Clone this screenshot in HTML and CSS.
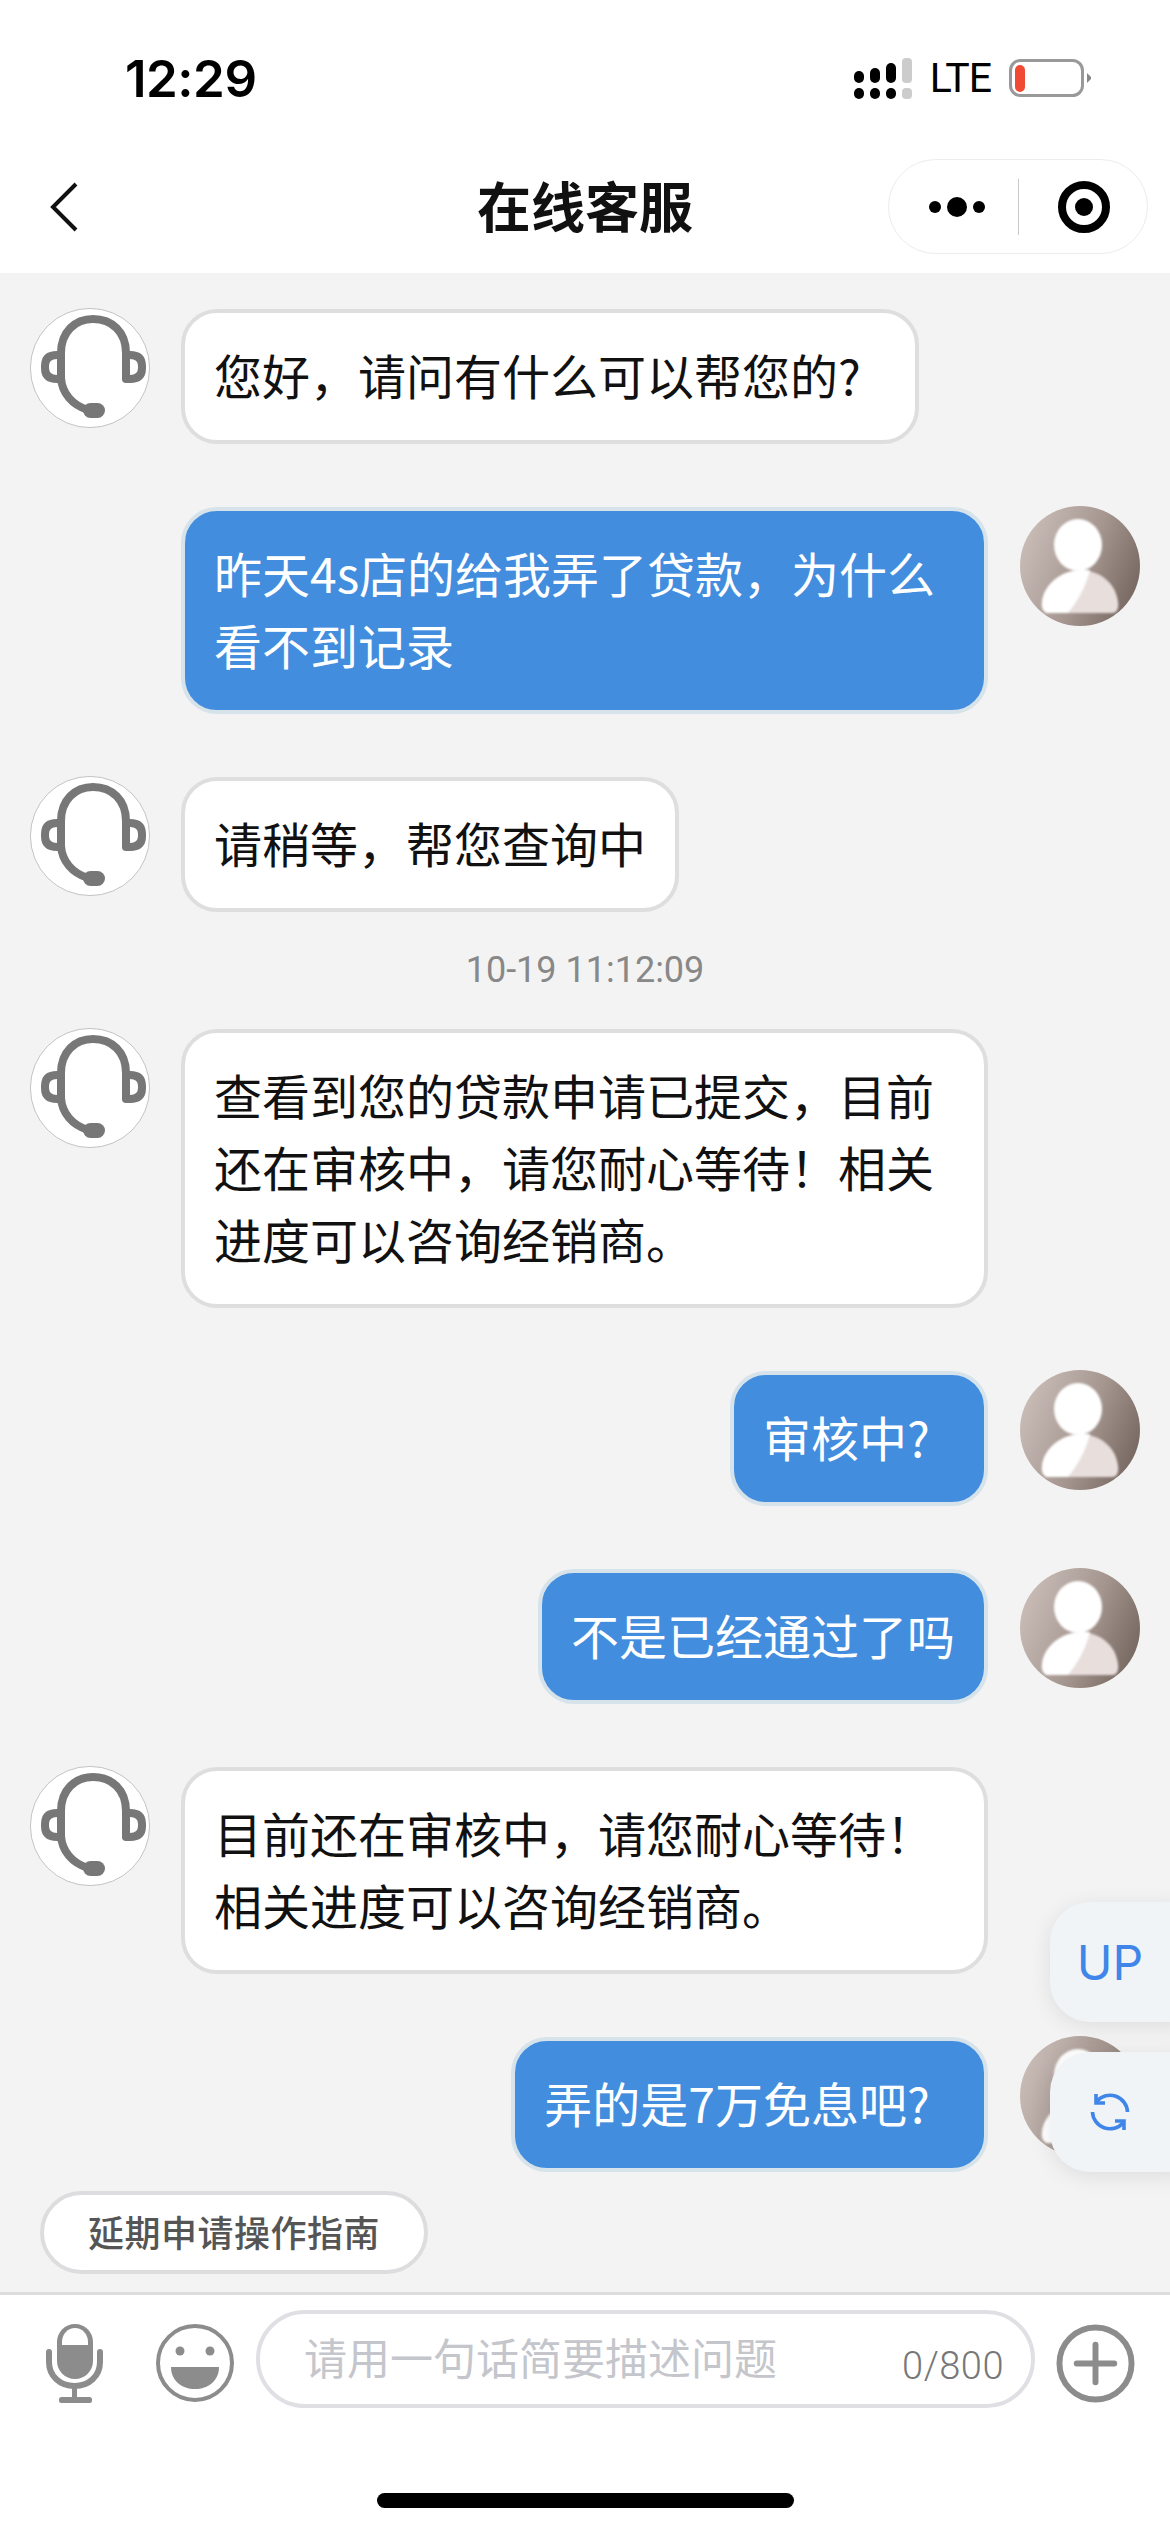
FILE: index.html
```html
<!DOCTYPE html>
<html>
  <head>
    <meta charset="utf-8" />
    <title>在线客服</title>
    <link rel="stylesheet" href="styles.css">
  </head>
  <body>
    <!-- shared avatars -->
    <svg class="defs" width="0" height="0">
      <defs>
        <linearGradient id="user-bg" x1="0" y1="0.3" x2="1" y2="0.7">
          <stop offset="0" stop-color="#cabdb7" />
          <stop offset="0.55" stop-color="#a4958f" />
          <stop offset="1" stop-color="#75665f" />
        </linearGradient>
        <filter id="soft" x="-10%" y="-10%" width="120%" height="120%">
          <feGaussianBlur stdDeviation="1.3" />
        </filter>
        <symbol id="user" viewBox="0 0 120 120">
          <circle cx="60" cy="60" r="60" fill="url(#user-bg)" />
          <g filter="url(#soft)">
            <ellipse cx="58" cy="39" rx="24" ry="26" fill="#fff" />
            <path d="M22 96 C24 78 42 64 60 64 C78 64 96 76 98 96 C99 104 96 107 92 107 H28 C24 107 21 102 22 96 Z" fill="#e8dedb" />
            <path d="M22 96 C24 78 42 64 62 64 L70 64 C66 80 58 95 48 107 H28 C24 107 21 102 22 96 Z" fill="#fff" />
          </g>
        </symbol>
        <symbol id="agent" viewBox="0 0 120 120">
          <circle cx="60" cy="60" r="59.6" fill="#fff" stroke="#b5b5b5" stroke-width="0.8" />
          <g fill="none" stroke="#777" stroke-width="8" stroke-linecap="round">
            <path d="M31 70 V45 C31 24 45 11 63 11 C82 11 96 24 96 45 V70" />
            <path d="M31 47 H27 Q15 47 15 58 V60 Q15 71 27 71 H31" />
            <path d="M96 47 H100 Q112 47 112 58 V60 Q112 71 100 71 H96" />
            <path d="M31 70 C32 85 42 97 58 102" />
          </g>
          <rect x="53" y="95" width="22" height="15" rx="7.5" fill="#777" />
        </symbol>
      </defs>
    </svg>

    <div class="page">
      <div class="status-bar">
        <span class="time">12:29</span>
        <div class="status-right">
          <svg class="signal" width="58" height="41" viewBox="0 0 58 41">
            <g fill="#000">
              <rect x="0" y="13" width="10" height="12" rx="5" />
              <rect x="16" y="10" width="10" height="15" rx="5" />
              <rect x="32" y="5" width="10" height="20" rx="5" />
              <rect x="0" y="30" width="10" height="11" rx="5" />
              <rect x="16" y="30" width="10" height="11" rx="5" />
              <rect x="32" y="30" width="10" height="11" rx="5" />
            </g>
            <g fill="#cccccc">
              <rect x="48" y="0" width="10" height="25" rx="4" />
              <rect x="48" y="30" width="10" height="11" rx="4" />
            </g>
          </svg>
          <span class="network">LTE</span>
          <svg class="battery" width="82" height="38" viewBox="0 0 82 38">
            <rect x="1.5" y="1.5" width="72" height="35" rx="10" fill="#fff" stroke="#999" stroke-width="3" />
            <rect x="6" y="6" width="10" height="27" rx="5" fill="#f04a35" />
            <path d="M78 14 L82 18 V20 L78 24 Z" fill="#888" />
          </svg>
        </div>
      </div>

      <div class="nav-bar">
        <svg class="back" width="28" height="50" viewBox="0 0 28 50">
          <path d="M26 2 L3 25 L26 48" fill="none" stroke="#111" stroke-width="4" />
        </svg>
        <div class="title">在线客服</div>
        <div class="capsule">
          <svg class="capsule-more" width="56" height="22" viewBox="0 0 56 22">
            <circle cx="6" cy="11" r="6" fill="#000" />
            <circle cx="28" cy="11" r="10" fill="#000" />
            <circle cx="50" cy="11" r="6" fill="#000" />
          </svg>
          <span class="capsule-line"></span>
          <svg class="capsule-target" width="52" height="52" viewBox="0 0 52 52">
            <circle cx="26" cy="26" r="22" fill="none" stroke="#000" stroke-width="8" />
            <circle cx="26" cy="26" r="9" fill="#000" />
          </svg>
        </div>
      </div>

      <div class="chat">
        <div class="msg">
          <svg class="avatar"><use href="#agent" /></svg>
          <div class="bubble">您好，请问有什么可以帮您的<span class="q">?</span></div>
        </div>
        <div class="msg mine">
          <div class="bubble">昨天4s店的给我弄了贷款，为什么看不到记录</div>
          <svg class="avatar"><use href="#user" /></svg>
        </div>
        <div class="msg">
          <svg class="avatar"><use href="#agent" /></svg>
          <div class="bubble">请稍等，帮您查询中</div>
        </div>
        <div class="stamp">10-19 11:12:09</div>
        <div class="msg">
          <svg class="avatar"><use href="#agent" /></svg>
          <div class="bubble">查看到您的贷款申请已提交，目前还在审核中，请您耐心等待！相关进度可以咨询经销商。</div>
        </div>
        <div class="msg mine">
          <div class="bubble">审核中<span class="q">?</span></div>
          <svg class="avatar"><use href="#user" /></svg>
        </div>
        <div class="msg mine">
          <div class="bubble">不是已经通过了吗</div>
          <svg class="avatar"><use href="#user" /></svg>
        </div>
        <div class="msg">
          <svg class="avatar"><use href="#agent" /></svg>
          <div class="bubble">目前还在审核中，请您耐心等待！相关进度可以咨询经销商。</div>
        </div>
        <div class="msg mine">
          <div class="bubble">弄的是7万免息吧<span class="q">?</span></div>
          <svg class="avatar"><use href="#user" /></svg>
        </div>

        <div class="quick">
          <span class="chip">延期申请操作指南</span>
        </div>

        <div class="floats">
          <div class="float-btn up">UP</div>
          <div class="float-btn">
            <svg width="44" height="44" viewBox="0 0 44 44" fill="none" stroke="#3f86e8" stroke-width="3.6">
              <path d="M9 11 A17.5 17.5 0 0 1 39.5 22" />
              <path d="M8 4 V13 H17" />
              <path d="M4.5 22 A17.5 17.5 0 0 0 35 33" />
              <path d="M36 40 V31 H27" />
            </svg>
          </div>
        </div>
      </div>

      <div class="footer">
        <div class="tools">
          <svg class="tool" width="57" height="79" viewBox="0 0 57 79">
            <path d="M29 0 C39 0 47 8 47 18 V37 C47 47 39 55 29 55 C19 55 11 47 11 37 V18 C11 8 19 0 29 0 Z" fill="#8c8c8c" />
            <path d="M29 4 C36 4 42 10 42 18 V21 H16 V18 C16 10 22 4 29 4 Z" fill="#fff" />
            <path d="M3 28 V38 C3 52 14 62 28.5 62 C43 62 54 52 54 38 V28" fill="none" stroke="#8c8c8c" stroke-width="6" stroke-linecap="round" />
            <rect x="26" y="60" width="5" height="15" fill="#8c8c8c" />
            <rect x="13" y="73" width="33" height="6" rx="2.5" fill="#8c8c8c" />
          </svg>
          <svg class="tool smile" width="78" height="78" viewBox="0 0 78 78">
            <circle cx="39" cy="39" r="37" fill="none" stroke="#8c8c8c" stroke-width="4" />
            <circle cx="24" cy="27" r="4.5" fill="#8c8c8c" />
            <circle cx="54" cy="27" r="4.5" fill="#8c8c8c" />
            <path d="M15 43 H63 C63 57 52 65 39 65 C26 65 15 57 15 43 Z" fill="#8c8c8c" />
          </svg>
          <div class="input-box">
            <span class="placeholder">请用一句话简要描述问题</span>
            <span class="counter">0/800</span>
          </div>
          <svg class="tool plus" width="79" height="79" viewBox="0 0 80 80">
            <circle cx="40" cy="40" r="36.5" fill="none" stroke="#8c8c8c" stroke-width="6" />
            <path d="M21 40 H59 M40 21 V59" fill="none" stroke="#8c8c8c" stroke-width="6" stroke-linecap="round" />
          </svg>
        </div>
        <div class="home-bar"></div>
      </div>
    </div>
  </body>
</html>
```

FILE: styles.css
```css
* {
  box-sizing: border-box;
}

body {
  margin: 0;
  background: #fff;
  font-family: "Noto Sans CJK SC", "Noto Sans", sans-serif;
  color: #111;
}

.defs {
  position: absolute;
}

.page {
  display: flex;
  flex-direction: column;
  width: 1170px;
  height: 2532px;
  overflow: hidden;
}

/* status bar */
.status-bar {
  display: flex;
  justify-content: space-between;
  align-items: center;
  height: 140px;
  padding: 16px 79px 0 125px;
}

.time {
  font-family: Inter, sans-serif;
  font-size: 51px;
  font-weight: 600;
  letter-spacing: -0.5px;
  color: #000;
}

.status-right {
  display: flex;
  align-items: center;
}

.network {
  margin: 0 18px;
  font-family: Roboto, sans-serif;
  font-size: 41px;
  line-height: 41px;
  letter-spacing: -1px;
  color: #000;
}

/* nav */
.nav-bar {
  display: grid;
  grid-template-columns: 1fr auto 1fr;
  align-items: center;
  height: 133px;
  padding: 0 22px;
}

.back {
  margin-left: 28px;
}

.title {
  padding-bottom: 5px;
  font-size: 54px;
  font-weight: 700;
  color: #111;
}

.capsule {
  display: flex;
  align-items: center;
  justify-self: end;
  width: 260px;
  height: 95px;
  padding-left: 40px;
  border: 1px solid #ececec;
  border-radius: 48px;
}

.capsule-line {
  width: 1px;
  height: 56px;
  margin: 0 39px 0 33px;
  background: #c9c9c9;
}

/* chat */
.chat {
  position: relative;
  height: 2019px;
  padding-top: 35px;
  background: #f3f3f3;
  overflow: hidden;
}

.msg {
  display: flex;
  align-items: flex-start;
  gap: 31px;
  padding: 0 30px;
  margin-bottom: 62px;
}

.msg.mine {
  justify-content: flex-end;
  gap: 32px;
}

.avatar {
  flex: none;
  width: 120px;
  height: 120px;
}

.bubble {
  max-width: 807px;
  margin-top: 1px;
  padding: 25px 29px 30px;
  border: 4px solid #dedede;
  border-radius: 36px;
  background: #fff;
  font-size: 48px;
  line-height: 72px;
  color: #111;
}

.mine .bubble {
  border-color: #d6e3ea;
  background: #428dde;
  color: #fff;
}

/* the question mark takes a full CJK cell */
.q {
  display: inline-block;
  width: 48px;
}

.stamp {
  margin: -30px 0 32px;
  font-family: Roboto, sans-serif;
  font-size: 36px;
  line-height: 52px;
  text-align: center;
  color: #888;
}

.quick {
  padding-left: 40px;
  margin-top: -43px;
}

.chip {
  display: inline-block;
  width: 388px;
  height: 83px;
  border: 4px solid #dddddf;
  border-radius: 42px;
  background: #fff;
  font-size: 36px;
  font-weight: 500;
  line-height: 72px;
  letter-spacing: 0.5px;
  text-align: center;
  color: #555;
}

.floats {
  position: absolute;
  top: 1629px;
  right: -40px;
  display: flex;
  flex-direction: column;
  gap: 30px;
}

.float-btn {
  display: flex;
  justify-content: center;
  align-items: center;
  width: 160px;
  height: 120px;
  padding-right: 40px;
  border-radius: 40px;
  background: #f0f4f7;
  box-shadow: 0 4px 22px rgba(0, 0, 0, 0.09);
}

.up {
  font-family: Inter, sans-serif;
  font-size: 48px;
  color: #3f86e8;
}

/* footer */
.footer {
  display: flex;
  flex: 1;
  flex-direction: column;
  align-items: flex-start;
  padding-top: 15px;
  border-top: 3px solid #dddddd;
  background: #fff;
}

.tools {
  display: flex;
  align-items: flex-start;
  padding-left: 46px;
}

.tool {
  flex: none;
  margin-top: 14px;
}

.smile {
  margin-left: 53px;
}

.plus {
  margin-left: 21px;
}

.input-box {
  display: flex;
  justify-content: space-between;
  width: 779px;
  height: 98px;
  margin-left: 22px;
  padding: 0 27px 0 44px;
  border: 4px solid #e0e0e4;
  border-radius: 49px;
}

.placeholder {
  font-size: 43px;
  line-height: 84px;
  color: #c4c6cc;
}

.counter {
  padding-top: 9px;
  font-family: Roboto, sans-serif;
  font-size: 38px;
  font-weight: 300;
  line-height: 86px;
  letter-spacing: 0.5px;
  color: #777;
}

.home-bar {
  align-self: center;
  width: 417px;
  height: 15px;
  margin-top: 85px;
  border-radius: 8px;
  background: #000;
}
```
